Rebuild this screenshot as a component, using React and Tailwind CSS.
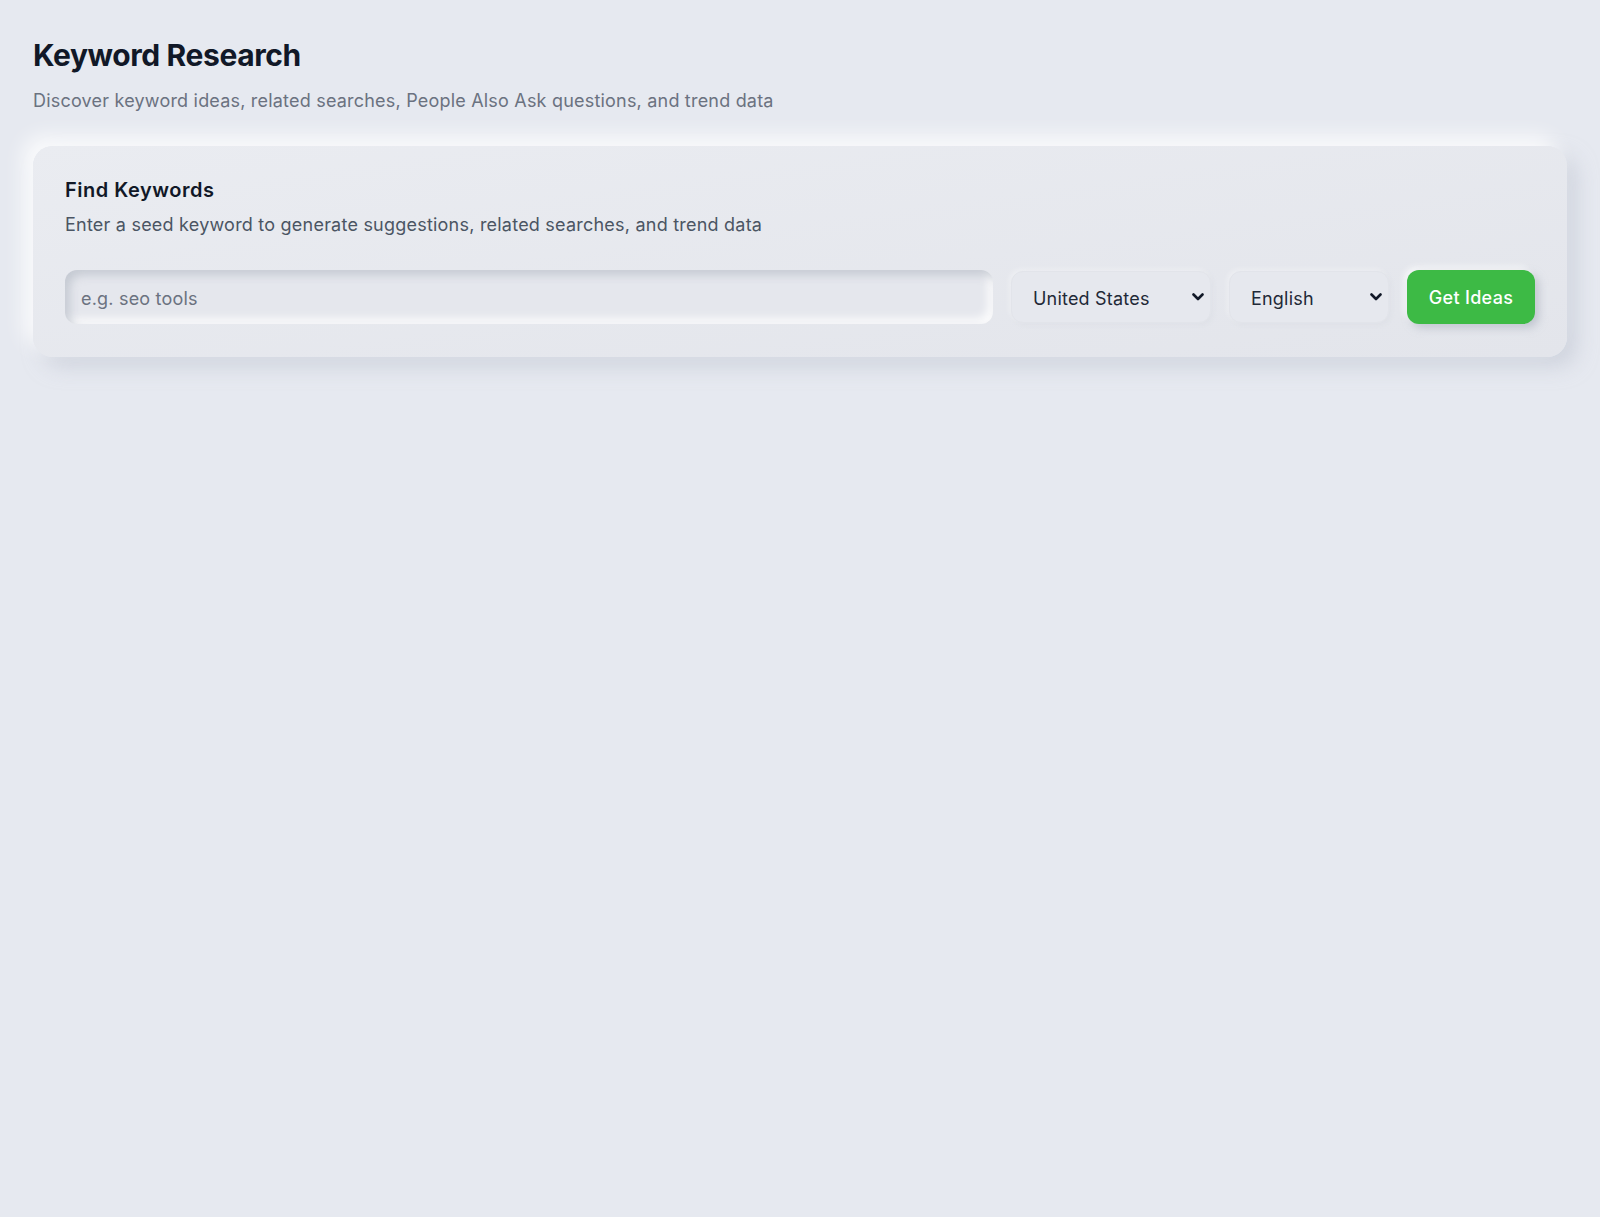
import React, { useState } from "react";

const countries = ["United States", "United Kingdom", "Canada", "Australia", "Germany"];
const languages = ["English", "Spanish", "German", "French"];

const Chevron = ({ className }) => (
  <svg viewBox="0 0 12 8" width="12" height="8" className={className} fill="none">
    <path d="M1.5 1.5 6 6l4.5-4.5" stroke="currentColor" strokeWidth="2.6" strokeLinecap="round" strokeLinejoin="round" />
  </svg>
);

const SelectBox = ({ value, options, onChange, width }) => (
  <div
    className={`relative ${width} h-[52px] rounded-xl bg-[#e6e8ee] border border-[#e2e4ea] shadow-[-2px_-2px_5px_rgba(255,255,255,0.35),2px_2px_5px_rgba(200,204,214,0.2)]`}
  >
    <select
      value={value}
      onChange={(e) => onChange(e.target.value)}
      className="w-full h-full appearance-none bg-transparent pl-[21px] pr-10 pt-[3px] text-[18px] tracking-[0.2px] text-[#1f2937] outline-none cursor-pointer"
    >
      {options.map((o) => (
        <option key={o}>{o}</option>
      ))}
    </select>
    <Chevron className="pointer-events-none absolute right-[6px] top-1/2 -translate-y-1/2 text-[#111827]" />
  </div>
);

const App = () => {
  const [keyword, setKeyword] = useState("");
  const [country, setCountry] = useState("United States");
  const [language, setLanguage] = useState("English");

  return (
    <div
      className="min-h-screen bg-[#e6e9f0] px-[33px] pt-[37px] pb-16"
      style={{ fontFamily: "Inter, 'Noto Sans', sans-serif" }}
    >
      {/* Page header */}
      <h1 className="text-[30px] leading-9 font-bold tracking-[-0.4px] text-[#111827]">Keyword Research</h1>
      <p className="mt-[14px] text-[18px] leading-7 tracking-[0.2px] text-[#6b7280]">
        Discover keyword ideas, related searches, People Also Ask questions, and trend data
      </p>

      {/* Search card */}
      <div className="mt-[31px] rounded-[20px] bg-gradient-to-br from-[#eaecf1] to-[#e3e5eb] px-8 pt-[30px] pb-[33px] shadow-[-10px_-10px_20px_rgba(255,255,255,0.8),10px_10px_20px_rgba(190,195,208,0.55)]">
        <h2 className="text-[20px] leading-7 font-semibold tracking-[0.5px] text-[#111827]">Find Keywords</h2>
        <p className="mt-[7px] text-[18px] leading-7 tracking-[0.22px] text-[#4b5563]">
          Enter a seed keyword to generate suggestions, related searches, and trend data
        </p>

        <div className="mt-[31px] flex items-center gap-[18px]">
          <input
            value={keyword}
            onChange={(e) => setKeyword(e.target.value)}
            placeholder="e.g. seo tools"
            className="flex-1 h-[54px] rounded-xl bg-[#e5e7ed] px-4 pt-[3px] text-[18px] tracking-[0.2px] text-[#111827] placeholder:text-[#6b7280] outline-none shadow-[inset_5px_5px_10px_rgba(184,189,200,0.7),inset_-5px_-5px_10px_rgba(255,255,255,0.9)]"
          />
          <SelectBox value={country} options={countries} onChange={setCountry} width="w-[200px]" />
          <SelectBox value={language} options={languages} onChange={setLanguage} width="w-[160px]" />
          <button className="h-[54px] w-[128px] rounded-xl bg-[#3dba45] text-[18px] font-medium tracking-[0.3px] text-white shadow-[4px_4px_8px_rgba(170,176,190,0.6),-3px_-3px_6px_rgba(255,255,255,0.7)]">
            Get Ideas
          </button>
        </div>
      </div>
    </div>
  );
};

export default App;
